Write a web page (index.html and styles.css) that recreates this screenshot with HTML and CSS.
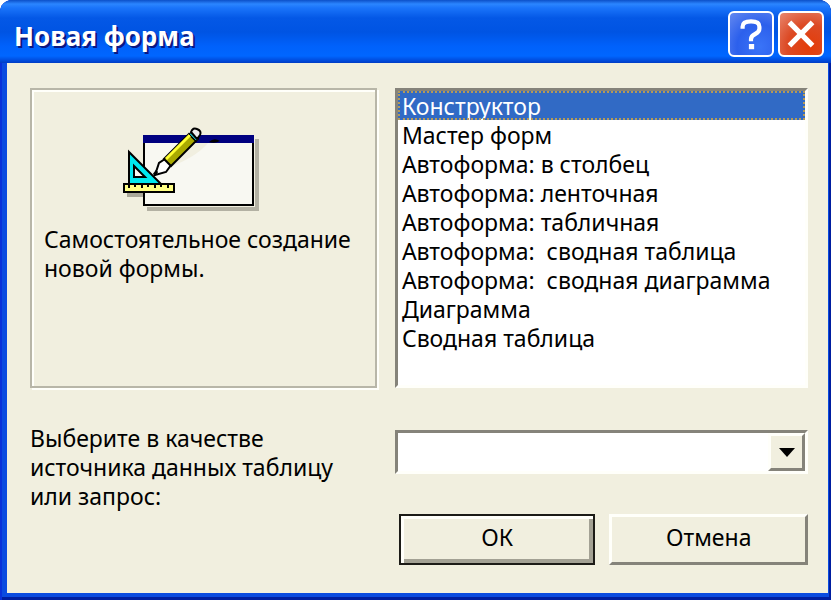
FILE: index.html
```
<!DOCTYPE html>
<html lang="ru">
<head>
  <meta charset="UTF-8">
  <meta name="viewport" content="width=device-width, initial-scale=1.0">
  <title>Новая форма</title>
  <link rel="stylesheet" href="styles.css">
</head>
<body>
  <main class="window">
    <header class="titlebar">
      <h1>Новая форма</h1>
      <button type="button" class="title-btn help" aria-label="Справка">
        <svg viewBox="0 0 40 40" fill="none" stroke="#fff" stroke-width="4">
          <path d="M12 15v-2q0-5 8-5t8 5v2q0 3-4 5t-4 5v2"/>
          <path d="M18 32h5" stroke-width="5"/>
        </svg>
      </button>
      <button type="button" class="title-btn close" aria-label="Закрыть">
        <svg viewBox="0 0 40 40" fill="none" stroke="#fff" stroke-width="5">
          <path d="M9 9l22 22M31 9L9 31"/>
        </svg>
      </button>
    </header>

    <form class="content">
      <section class="preview">
        <svg class="preview-icon" viewBox="120 124 142 88" aria-hidden="true">
          <path d="M147 206h108v-68h4v72H147z" fill="#b3b1a3"/>
          <path d="M127 192h46v-5h5v9h-51z" fill="#aaa89a"/>
          <rect x="144" y="135" width="109" height="69" fill="#f8f8f2" stroke="#000" stroke-width="2"/>
          <rect x="143" y="134" width="111" height="8" fill="#000080"/>
          <path d="M170 166l26-24h12q-12 14-38 24z" fill="#f1efe0"/>
          <path d="M209 141q5-5 11-1-5 3-11 1z" fill="#000"/>
          <path d="M129 151v32h32z" fill="#00e8f0" stroke="#000" stroke-width="2"/>
          <path d="M134 165v11h11z" fill="#f8f8f2" stroke="#000" stroke-width="2"/>
          <rect x="124" y="183" width="50" height="8" fill="#ffff84" stroke="#000" stroke-width="2"/>
          <path d="M129 183v4M135 183v3M142 183v4M148 183v3M155 183v4M161 183v3M168 183v4" stroke="#000" stroke-width="2"/>
          <path d="M155 174l4-12 6-4 6 6-5 7z" fill="#fff" stroke="#000" stroke-width="2"/>
          <path d="M164 158l25-25 7 7-25 25z" fill="#a9a900" stroke="#000" stroke-width="2"/>
          <path d="M166 158l24-24" stroke="#ffff30" stroke-width="3"/>
          <path d="M189 133l3-2 7 7-3 2z" fill="#20b0b0" stroke="#000"/>
          <path d="M191 131q2-5 6-3 5 2 3 6l-3 4z" fill="#eee" stroke="#000" stroke-width="2"/>
          <path d="M154 174l3-4" stroke="#000" stroke-width="3"/>
        </svg>
        <p>Самостоятельное создание новой формы.</p>
      </section>

      <select class="form-types" size="9" aria-label="Способ создания формы">
        <option selected>Конструктор</option>
        <option>Мастер форм</option>
        <option>Автоформа: в столбец</option>
        <option>Автоформа: ленточная</option>
        <option>Автоформа: табличная</option>
        <option>Автоформа:&nbsp; сводная таблица</option>
        <option>Автоформа:&nbsp; сводная диаграмма</option>
        <option>Диаграмма</option>
        <option>Сводная таблица</option>
      </select>

      <label class="source-label" for="source">Выберите в качестве источника данных таблицу или запрос:</label>

      <div class="controls">
        <div class="combo">
          <select id="source">
            <option></option>
          </select>
          <span class="combo-arrow"></span>
        </div>
        <div class="buttons">
          <button type="submit" class="btn default">ОК</button>
          <button type="button" class="btn">Отмена</button>
        </div>
      </div>
    </form>
  </main>
</body>
</html>
```
FILE: styles.css
```
* {
  box-sizing: border-box;
}
body {
  margin: 0;
  background: #fff;
  color: #000;
  font-family: "Noto Sans", "Open Sans", sans-serif;
  font-size: 23px;
  line-height: 29px;
}
.window {
  background: #0a4be0;
  border-radius: 12px 12px 0 0;
  padding: 0 3px 7px 7px;
  box-shadow: inset 2px 0 #0831d9, inset -2px 0 #001ea0, inset 0 -3px #001ea0;
}
.titlebar {
  display: flex;
  align-items: center;
  gap: 4px;
  height: 63px;
  margin: 0 -3px 0 -7px;
  padding: 5px 7px 0 14px;
  border-radius: 12px 12px 0 0;
  background: linear-gradient(#0c50c8 0, #2b86ff 4px, #1a74fa 8px, #0458e6 18px, #0054e3 32px, #0061fb 46px, #0066ff 56px, #0048d8 61px, #003cc4 63px);
}
h1 {
  flex: 1;
  margin: 0;
  padding-top: 4px;
  color: #fff;
  font-size: 26px;
  line-height: 36px;
  text-shadow: 2px 2px #0a1883;
}
.title-btn {
  width: 46px;
  height: 46px;
  padding: 0;
  border: 2px solid #fff;
  border-radius: 6px;
}
.title-btn svg {
  display: block;
  width: 100%;
}
.help {
  background: radial-gradient(circle at 70% 80%, #3a74f8, #2c60ec 50%, #6489f0);
}
.close {
  background: radial-gradient(circle at 70% 80%, #e43c08, #dc4a25 50%, #e88870);
}
.content {
  display: grid;
  grid-template-columns: 346fr 412fr;
  gap: 42px 18px;
  padding: 25px 20px 28px 23px;
  background: #f1efdf;
}
.preview {
  padding: 35px 12px 0;
  border: 2px solid #b8b6a8;
  box-shadow: inset 2px 2px #fffffa, 2px 2px #fffffa;
}
.preview-icon {
  display: block;
  width: 142px;
  height: 88px;
  margin-left: 76px;
}
.preview p {
  margin: 12px 0 0;
}
.form-types {
  height: 300px;
  padding: 0;
  overflow: hidden;
  border: 3px solid;
  border-color: #85837a #fffffa #fffffa #85837a;
  border-radius: 0;
  outline: 0;
  background: #fff;
  color: #000;
  font: inherit;
}
.form-types option {
  display: flex;
  align-items: center;
  height: 29px;
  min-height: 0;
  padding: 0 4px;
}
.form-types option:checked {
  background: #316ac5 linear-gradient(#316ac5, #316ac5);
  color: #fff;
  outline: 2px dotted #b49a58;
  outline-offset: -2px;
}
.source-label {
  margin-top: -6px;
  padding-right: 32px;
}
.combo {
  position: relative;
}
.combo select {
  display: block;
  width: 100%;
  height: 44px;
  appearance: none;
  border: 3px solid;
  border-color: #85837a #fffffa #fffffa #85837a;
  border-radius: 0;
  background: #fff;
  font: inherit;
}
.combo-arrow {
  position: absolute;
  top: 3px;
  right: 3px;
  bottom: 3px;
  display: grid;
  place-items: center;
  width: 37px;
  border: 3px solid;
  border-color: #fffffa #85837a #85837a #fffffa;
  background: #f1efdf;
  pointer-events: none;
}
.combo-arrow::before {
  content: "";
  border: 8px solid transparent;
  border-top: 9px solid #000;
  border-bottom: 0;
}
.buttons {
  display: flex;
  gap: 14px;
  margin-top: 40px;
  padding-left: 4px;
}
.btn {
  flex: 1;
  height: 51px;
  padding: 0 0 4px;
  border: 3px solid;
  border-color: #fffffa #85837a #85837a #fffffa;
  background: #f1efdf;
  color: #000;
  font: inherit;
}
.btn.default {
  border: 2px solid #1c1b17;
  box-shadow: inset 3px 3px #fffffa, inset -4px -4px #a3a194;
}
```
